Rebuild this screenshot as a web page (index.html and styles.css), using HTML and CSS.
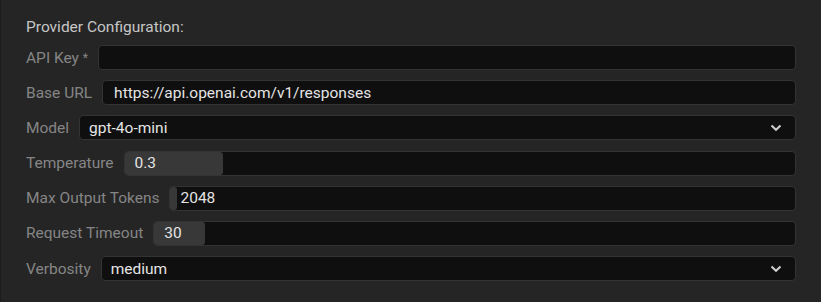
FILE: index.html
```html
<!DOCTYPE html>
<html>
<head>
<meta charset="utf-8">
<link rel="stylesheet" href="styles.css">
</head>
<body>
<div class="panel">
  <div class="title">Provider Configuration:</div>
  <div class="rows">
    <div class="row">
      <span class="label">API Key <span class="req">*</span></span>
      <div class="field"></div>
    </div>
    <div class="row">
      <span class="label">Base URL</span>
      <div class="field text-url">https://api.openai.com/v1/responses</div>
    </div>
    <div class="row">
      <span class="label">Model</span>
      <div class="field select"><span>gpt-4o-mini</span>
        <svg class="chev" width="12" height="8" viewBox="0 0 12 8"><path d="M1.5 1.5 L6 5.8 L10.5 1.5" fill="none" stroke="#cfcfcf" stroke-width="2"/></svg>
      </div>
    </div>
    <div class="row">
      <span class="label">Temperature</span>
      <div class="field slider"><div class="fill" style="width:98px"></div><span class="val">0.3</span></div>
    </div>
    <div class="row">
      <span class="label">Max Output Tokens</span>
      <div class="field slider"><div class="fill" style="width:7px"></div><span class="val">2048</span></div>
    </div>
    <div class="row">
      <span class="label">Request Timeout</span>
      <div class="field slider"><div class="fill" style="width:51px"></div><span class="val">30</span></div>
    </div>
    <div class="row">
      <span class="label">Verbosity</span>
      <div class="field select"><span>medium</span>
        <svg class="chev" width="12" height="8" viewBox="0 0 12 8"><path d="M1.5 1.5 L6 5.8 L10.5 1.5" fill="none" stroke="#cfcfcf" stroke-width="2"/></svg>
      </div>
    </div>
  </div>
</div>
</body>
</html>
```
FILE: styles.css
```css
html, body {
  margin: 0;
  padding: 0;
  background: #252525;
  width: 821px;
  height: 302px;
  overflow: hidden;
}
body {
  font-family: Roboto, "Liberation Sans", sans-serif;
  font-size: 15.5px;
  border-left: 1px solid #1c1c1c;
  box-sizing: border-box;
}
.panel {
  padding: 17px 25px 0 25px;
}
.title {
  color: #c6c6c6;
  line-height: 20px;
  height: 20px;
  margin-bottom: 8px;
}
.rows {
  display: flex;
  flex-direction: column;
  gap: 10.2px;
}
.row {
  display: flex;
  align-items: center;
  height: 25px;
  gap: 10px;
}
.label {
  color: #858585;
  white-space: nowrap;
}
.req {
  font-size: 12px;
  vertical-align: 1px;
}
.field {
  flex: 1;
  height: 25px;
  box-sizing: border-box;
  background: #0f0f0f;
  border: 1px solid #333333;
  border-radius: 4px;
  color: #e4e4e4;
  display: flex;
  align-items: center;
  padding: 0 9px;
  position: relative;
}
.text-url {
  padding-left: 11px;
}
.select {
  justify-content: space-between;
  padding-right: 13px;
}
.slider {
  padding: 0;
}
.slider .fill {
  position: absolute;
  left: 0;
  top: 0;
  bottom: 0;
  background: #383838;
  border-radius: 3px;
}
.slider .val {
  position: relative;
  padding-left: 10px;
}
```
